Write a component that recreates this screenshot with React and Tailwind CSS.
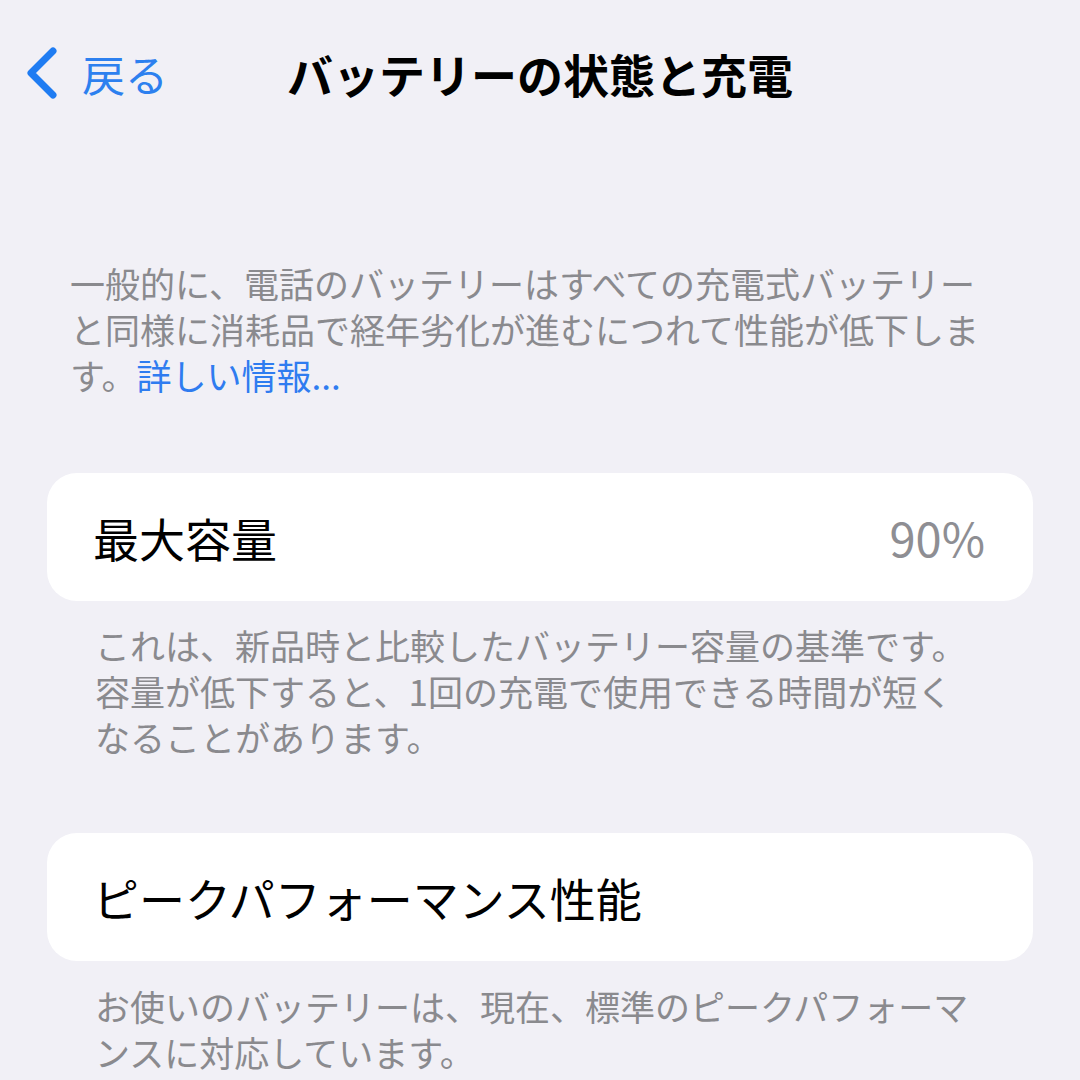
import React from 'react';

const font = { fontFamily: '"Noto Sans CJK JP", "Noto Sans", sans-serif' };

const Chevron = () => (
    <svg width="34" height="54" viewBox="0 0 34 54" fill="none">
        <path d="M29 5 L7 27 L29 49" stroke="#1f7cf2" strokeWidth="7" strokeLinecap="round" strokeLinejoin="round" />
    </svg>
);

const Note = ({ lines, className }) => (
    <div className={`text-[35px] leading-[46px] text-[#8a8a8e] ${className}`}>
        {lines.map((line, i) => (
            <div key={i} className="whitespace-nowrap">{line}</div>
        ))}
    </div>
);

const Card = ({ label, value, className }) => (
    <div className={`mx-[47px] h-[128px] rounded-[30px] bg-white flex items-center justify-between pl-[46px] pr-[48px] ${className}`}>
        <span className="text-[46px] text-black">{label}</span>
        {value && <span className="text-[47px] text-[#8e8e93]">{value}</span>}
    </div>
);

export default function App() {
    return (
        <div className="w-[1080px] h-[1080px] overflow-hidden bg-[#f1f0f6]" style={font}>
            {/* Nav bar */}
            <div className="mt-[45px] h-[56px] grid grid-cols-[1fr_auto_1fr] items-center">
                <div className="flex items-center pl-[24px] gap-[24px]">
                    <Chevron />
                    <span className="text-[43px] text-[#2d80ef] leading-none">戻る</span>
                </div>
                <h1 className="text-[46px] font-bold text-black leading-none">バッテリーの状態と充電</h1>
                <div />
            </div>

            <Note
                className="mt-[159px] pl-[70px]"
                lines={[
                    '一般的に、電話のバッテリーはすべての充電式バッテリー',
                    'と同様に消耗品で経年劣化が進むにつれて性能が低下しま',
                    <>す。<span className="text-[#2f7cf0]">詳しい情報...</span></>,
                ]}
            />

            <Card className="mt-[75px]" label="最大容量" value="90%" />

            <Note
                className="mt-[21px] pl-[95px]"
                lines={[
                    'これは、新品時と比較したバッテリー容量の基準です。',
                    '容量が低下すると、1回の充電で使用できる時間が短く',
                    'なることがあります。',
                ]}
            />

            <Card className="mt-[73px]" label="ピークパフォーマンス性能" />

            <Note
                className="mt-[22px] pl-[95px]"
                lines={[
                    'お使いのバッテリーは、現在、標準のピークパフォーマ',
                    'ンスに対応しています。',
                ]}
            />
        </div>
    );
}
